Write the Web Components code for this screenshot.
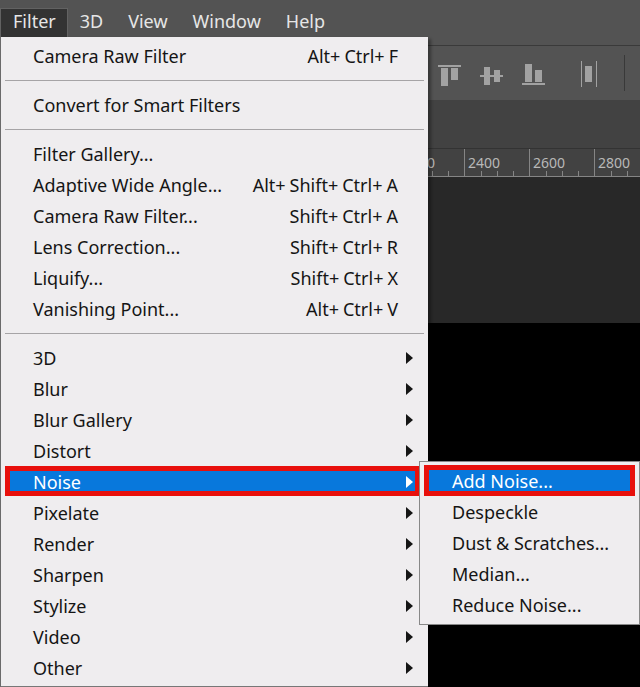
<!DOCTYPE html>
<html lang="en">
<head>
<meta charset="utf-8">
<title>Filter menu</title>
<style>
  body { margin: 0; background: #000; font-family: "Noto Sans", "Open Sans", sans-serif; font-size: 18px; }
</style>
</head>
<body>
<photo-editor></photo-editor>
<script>
const define = (name, html, setup) => {
  const template = document.createElement('template');
  template.innerHTML = html;
  customElements.define(name, class extends HTMLElement {
    connectedCallback() {
      if (this.shadowRoot) return;
      this.attachShadow({ mode: 'open' }).append(template.content.cloneNode(true));
      if (setup) setup(this, this.shadowRoot);
    }
  });
};

define('menu-tab', `
  <style>
    :host { display: block; position: relative; }
    button { display: block; border: 0; margin: 0; padding: 0 12px 4px; height: 28px; background: none; color: #e6e6e6; font: inherit; line-height: 24px; white-space: nowrap; }
    :host([open]) button { padding-right: 11px; background: #333; box-shadow: 0 0 0 1px #626262; }
    ::slotted(drop-menu) { position: absolute; left: 0; top: 100%; z-index: 2; }
  </style>
  <button type="button"><slot></slot></button><slot name="menu"></slot>`);

define('drop-menu', `
  <style>
    :host { display: block; box-sizing: border-box; width: 427px; padding: 4px 4px 2px; background: #efedef; border-bottom: 1px solid #777; box-shadow: -1px 0 #6a6a6a, 3px 2px 3px #0005; }
    :host([sub]) { width: 221px; padding: 4px 4px 3px; border: 1px solid #888; box-shadow: none; }
  </style>
  <slot></slot>`);

define('menu-line', `
  <style>
    :host { display: block; padding: 8px 0 9px; }
    hr { margin: 0; border: 0; border-top: 1px solid #a6a4a6; }
  </style><hr>`);

define('menu-row', `
  <style>
    :host { display: block; position: relative; color: #151515; }
    button { display: flex; width: 100%; height: 31px; align-items: center; justify-content: space-between; border: 0; margin: 0; padding: 0 26px 1px 28px; background: none; color: inherit; font: inherit; line-height: 28px; white-space: nowrap; text-align: left; }
    #keys { display: flex; gap: 4px; }
    svg { display: none; width: 7px; height: 12px; margin-right: -15px; fill: currentColor; }
    :host([more]) svg { display: block; }
    :host([active]) { color: #fff; }
    :host([active])::before { content: ""; position: absolute; inset: -1px 4px 2px 0; box-sizing: border-box; border: 5px solid #e8100c; background: #0878dc; }
    :host([sub][active])::before { inset: -1px 0 1px 0; }
    :host([active]) button { position: relative; }
    ::slotted(drop-menu) { position: absolute; left: 414px; top: -6px; z-index: 3; }
  </style>
  <button type="button"><span><slot></slot></span><span id="keys"></span><svg viewBox="0 0 7 12" aria-hidden="true"><path d="M0 0L7 6L0 12Z"/></svg></button>
  <slot name="menu"></slot>`, (host, root) => {
    const keys = root.getElementById('keys');
    if (!host.hasAttribute('keys')) return keys.remove();
    for (const part of host.getAttribute('keys').match(/[^+]+\+?/g)) {
      const key = document.createElement('span');
      key.textContent = part;
      keys.append(key);
    }
  });

define('menu-bar', `
  <style>
    :host { display: flex; gap: 1px; align-items: flex-start; box-sizing: border-box; height: 46px; padding: 9px 0 0 1px; background: #535353; border-bottom: 1px solid #3a3a3a; }
  </style>
  <slot></slot>`);

define('option-bar', `
  <style>
    :host { display: flex; align-items: center; height: 54px; padding-left: 438px; background: #535353; }
    button { display: block; border: 0; padding: 0; margin: 0 18px 0 0; background: none; }
    button:nth-of-type(3) { margin-right: 34px; }
    svg { display: block; fill: #a2a2a2; }
    i { width: 1px; height: 36px; margin-left: 8px; background: #393939; }
  </style>
  <button type="button" aria-label="Align top edges"><svg width="24" height="26"><path d="M0 5h23v2H0zM3 8h7v18H3zM13 8h7v12h-7z"/></svg></button>
  <button type="button" aria-label="Align vertical centers"><svg width="24" height="26"><path d="M0 15h23v2H0zM4 7h6v18H4zM14 10h6v12h-6z"/></svg></button>
  <button type="button" aria-label="Align bottom edges"><svg width="24" height="26"><path d="M0 23h23v2H0zM3 4h7v18H3zM13 10h7v12h-7z"/></svg></button>
  <button type="button" aria-label="Distribute horizontally"><svg width="18" height="28"><path d="M1 2h1v26H1zM16 2h1v26h-1zM5 7h7v16H5z"/></svg></button>
  <i></i>`);

define('ruler-mark', `
  <style>
    :host { display: block; flex: 0 0 64px; border-left: 1px solid #858585; color: #b8b8b8; font: 14px/27px "Noto Sans", sans-serif; }
    div { display: flex; flex-direction: column; height: 27px; padding-left: 3px; }
    svg { display: block; margin-left: -3px; margin-top: -5px; width: 64px; height: 5px; flex: none; stroke: #858585; }
  </style>
  <div><span><slot></slot></span><svg aria-hidden="true"><path d="M16.5 0v5M32.5 0v5M48.5 0v5"/></svg></div>`);

define('tick-ruler', `
  <style>
    :host { display: flex; overflow: hidden; height: 27px; padding-left: 399px; background: #424242; border-top: 1px solid #333; border-bottom: 1px solid #858585; }
  </style>
  <slot></slot>`);

define('photo-editor', `
  <style>
    :host { display: flex; flex-direction: column; min-height: 100vh; overflow: hidden; }
    .tabs { height: 48px; background: #424242; }
    .board { height: 146px; background: #282828; }
    .image { flex: 1; background: #000; }
  </style>
  <menu-bar>
    <menu-tab open>Filter
      <drop-menu slot="menu">
        <menu-row keys="Alt+Ctrl+F">Camera Raw Filter</menu-row>
        <menu-line></menu-line>
        <menu-row>Convert for Smart Filters</menu-row>
        <menu-line></menu-line>
        <menu-row>Filter Gallery...</menu-row>
        <menu-row keys="Alt+Shift+Ctrl+A">Adaptive Wide Angle...</menu-row>
        <menu-row keys="Shift+Ctrl+A">Camera Raw Filter...</menu-row>
        <menu-row keys="Shift+Ctrl+R">Lens Correction...</menu-row>
        <menu-row keys="Shift+Ctrl+X">Liquify...</menu-row>
        <menu-row keys="Alt+Ctrl+V">Vanishing Point...</menu-row>
        <menu-line></menu-line>
        <menu-row more>3D</menu-row>
        <menu-row more>Blur</menu-row>
        <menu-row more>Blur Gallery</menu-row>
        <menu-row more>Distort</menu-row>
        <menu-row more active>Noise
          <drop-menu sub slot="menu">
            <menu-row sub active>Add Noise...</menu-row>
            <menu-row>Despeckle</menu-row>
            <menu-row>Dust &amp; Scratches...</menu-row>
            <menu-row>Median...</menu-row>
            <menu-row>Reduce Noise...</menu-row>
          </drop-menu>
        </menu-row>
        <menu-row more>Pixelate</menu-row>
        <menu-row more>Render</menu-row>
        <menu-row more>Sharpen</menu-row>
        <menu-row more>Stylize</menu-row>
        <menu-row more>Video</menu-row>
        <menu-row more>Other</menu-row>
      </drop-menu>
    </menu-tab>
    <menu-tab>3D</menu-tab>
    <menu-tab>View</menu-tab>
    <menu-tab>Window</menu-tab>
    <menu-tab>Help</menu-tab>
  </menu-bar>
  <option-bar></option-bar>
  <div class="tabs"></div>
  <tick-ruler>
    <ruler-mark>2200</ruler-mark><ruler-mark>2400</ruler-mark><ruler-mark>2600</ruler-mark><ruler-mark>2800</ruler-mark>
  </tick-ruler>
  <div class="board"></div>
  <div class="image"></div>`);
</script>
</body>
</html>
